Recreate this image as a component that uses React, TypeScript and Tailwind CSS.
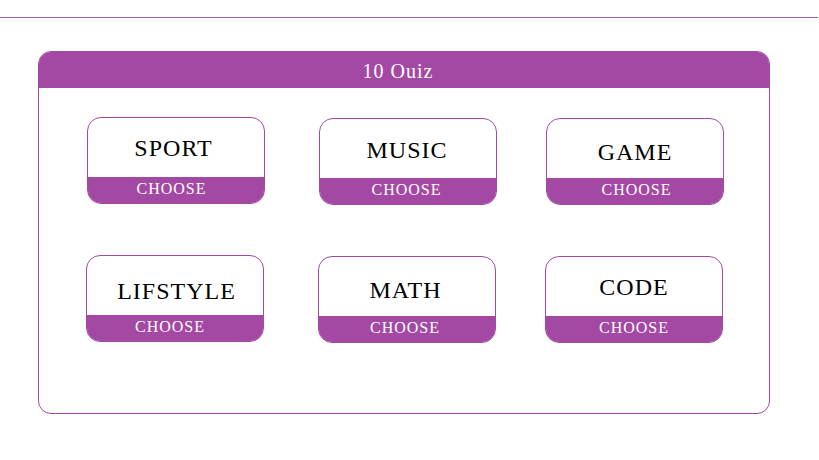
import React from "react";

const serif = "font-['Liberation_Serif',_'Times_New_Roman',_serif]";

// pt/px nudges keep each label where the original sits inside its card
type Quiz = { name: string; pt: string; mt: string; ml: string; tx: string; cx: string };

const ROW1: Quiz[] = [
  { name: "SPORT", pt: "pt-[18px]", mt: "mt-0", ml: "ml-[48px]", tx: "pr-[5px]", cx: "pr-[9px]" },
  { name: "MUSIC", pt: "pt-[19px]", mt: "mt-[1px]", ml: "ml-[54px]", tx: "pr-[2px]", cx: "pr-[3px]" },
  { name: "GAME", pt: "pt-[21px]", mt: "mt-[1px]", ml: "ml-[49px]", tx: "pl-0", cx: "pl-[3px]" },
];

const ROW2: Quiz[] = [
  { name: "LIFSTYLE", pt: "pt-[23px]", mt: "mt-0", ml: "ml-[47px]", tx: "pl-[3px]", cx: "pr-[10px]" },
  { name: "MATH", pt: "pt-[21px]", mt: "mt-[1px]", ml: "ml-[54px]", tx: "pr-[3px]", cx: "pr-[4px]" },
  { name: "CODE", pt: "pt-[18px]", mt: "mt-[1px]", ml: "ml-[49px]", tx: "pl-0", cx: "pl-0" },
];

function QuizCard({ quiz }: { quiz: Quiz }) {
  return (
    <div
      className={`${quiz.ml} ${quiz.mt} flex h-[87px] w-[178px] flex-col overflow-hidden rounded-[14px] border border-[#a349a4] bg-white`}
    >
      <div className={`h-[59px] ${quiz.pt} ${quiz.tx} text-center text-[24px] leading-none tracking-[1px] text-black`}>
        {quiz.name}
      </div>
      <div className={`h-[26px] cursor-pointer bg-[#a349a4] pt-[4px] ${quiz.cx} text-center text-[16px] leading-none tracking-[1px] text-white`}>
        CHOOSE
      </div>
    </div>
  );
}

export default function App() {
  return (
    <div className={`h-[460px] w-[819px] bg-white ${serif}`}>
      <div className="pt-[17px]">
        <div className="h-px w-[818px] bg-[#a05aa4]" />
      </div>

      {/* Quiz panel */}
      <div className="ml-[38px] mt-[33px] h-[363px] w-[732px] overflow-hidden rounded-[13px] border border-[#a349a4]">
        <div className="h-[36px] bg-[#a349a4] pr-[12px] pt-[9px] text-center text-[20px] leading-none tracking-[1px] text-white">
          10 Ouiz
        </div>

        <div className="mt-[29px] flex items-start">
          {ROW1.map(q => <QuizCard key={q.name} quiz={q} />)}
        </div>
        <div className="mt-[50px] flex items-start">
          {ROW2.map(q => <QuizCard key={q.name} quiz={q} />)}
        </div>
      </div>
    </div>
  );
}
